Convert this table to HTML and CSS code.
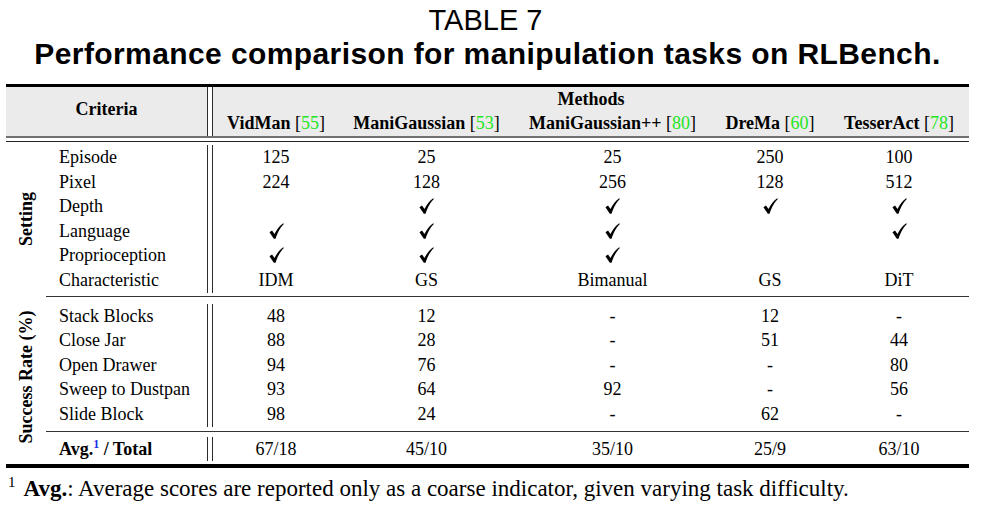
FILE: index.html
```html
<!DOCTYPE html>
<html>
<head>
<meta charset="utf-8">
<title>Table 7</title>
<link rel="stylesheet" href="styles.css">
</head>
<body>
<div class="page">
  <div class="cap1">TABLE 7</div>
  <div class="cap2">Performance comparison for manipulation tasks on RLBench.</div>
  <div class="toprule"></div>
  <table class="tbl">
    <colgroup>
      <col class="w0"><col class="w1"><col class="wd"><col class="wv"><col class="wm"><col class="wp"><col class="wr"><col class="wt">
    </colgroup>
    <thead>
      <tr class="h1">
        <th colspan="2" rowspan="2" class="crit-h">Criteria</th>
        <th rowspan="2" class="dbl dbl-h"></th>
        <th colspan="5">Methods</th>
      </tr>
      <tr class="h2">
        <th>VidMan <span class="cite">[<span class="g">55</span>]</span></th>
        <th>ManiGaussian <span class="cite">[<span class="g">53</span>]</span></th>
        <th>ManiGaussian++ <span class="cite">[<span class="g">80</span>]</span></th>
        <th>DreMa <span class="cite">[<span class="g">60</span>]</span></th>
        <th>TesserAct <span class="cite">[<span class="g">78</span>]</span></th>
      </tr>
    </thead>
    <tbody>
      <tr class="rule"><td colspan="8"><div class="hdline"></div></td></tr>

      <tr>
        <td rowspan="6" class="grp"><span class="vlab vlab-set">Setting</span></td>
        <td class="crit">Episode</td><td class="dbl"></td>
        <td>125</td><td>25</td><td>25</td><td>250</td><td>100</td>
      </tr>
      <tr>
        <td class="crit">Pixel</td><td class="dbl"></td>
        <td>224</td><td>128</td><td>256</td><td>128</td><td>512</td>
      </tr>
      <tr>
        <td class="crit">Depth</td><td class="dbl"></td>
        <td></td>
        <td><svg class="ck" viewBox="0 0 14 15"><path d="M0.4 8.7 L2.8 7.1 L5.1 10.2 C7.3 6 10 2.6 13.3 0.2 L13.9 0.9 C11 3.7 8.5 7.6 6.1 14.7 L4.5 14.7 Z"/></svg></td>
        <td><svg class="ck" viewBox="0 0 14 15"><path d="M0.4 8.7 L2.8 7.1 L5.1 10.2 C7.3 6 10 2.6 13.3 0.2 L13.9 0.9 C11 3.7 8.5 7.6 6.1 14.7 L4.5 14.7 Z"/></svg></td>
        <td><svg class="ck" viewBox="0 0 14 15"><path d="M0.4 8.7 L2.8 7.1 L5.1 10.2 C7.3 6 10 2.6 13.3 0.2 L13.9 0.9 C11 3.7 8.5 7.6 6.1 14.7 L4.5 14.7 Z"/></svg></td>
        <td><svg class="ck" viewBox="0 0 14 15"><path d="M0.4 8.7 L2.8 7.1 L5.1 10.2 C7.3 6 10 2.6 13.3 0.2 L13.9 0.9 C11 3.7 8.5 7.6 6.1 14.7 L4.5 14.7 Z"/></svg></td>
      </tr>
      <tr>
        <td class="crit">Language</td><td class="dbl"></td>
        <td><svg class="ck" viewBox="0 0 14 15"><path d="M0.4 8.7 L2.8 7.1 L5.1 10.2 C7.3 6 10 2.6 13.3 0.2 L13.9 0.9 C11 3.7 8.5 7.6 6.1 14.7 L4.5 14.7 Z"/></svg></td>
        <td><svg class="ck" viewBox="0 0 14 15"><path d="M0.4 8.7 L2.8 7.1 L5.1 10.2 C7.3 6 10 2.6 13.3 0.2 L13.9 0.9 C11 3.7 8.5 7.6 6.1 14.7 L4.5 14.7 Z"/></svg></td>
        <td><svg class="ck" viewBox="0 0 14 15"><path d="M0.4 8.7 L2.8 7.1 L5.1 10.2 C7.3 6 10 2.6 13.3 0.2 L13.9 0.9 C11 3.7 8.5 7.6 6.1 14.7 L4.5 14.7 Z"/></svg></td>
        <td></td>
        <td><svg class="ck" viewBox="0 0 14 15"><path d="M0.4 8.7 L2.8 7.1 L5.1 10.2 C7.3 6 10 2.6 13.3 0.2 L13.9 0.9 C11 3.7 8.5 7.6 6.1 14.7 L4.5 14.7 Z"/></svg></td>
      </tr>
      <tr>
        <td class="crit">Proprioception</td><td class="dbl"></td>
        <td><svg class="ck" viewBox="0 0 14 15"><path d="M0.4 8.7 L2.8 7.1 L5.1 10.2 C7.3 6 10 2.6 13.3 0.2 L13.9 0.9 C11 3.7 8.5 7.6 6.1 14.7 L4.5 14.7 Z"/></svg></td>
        <td><svg class="ck" viewBox="0 0 14 15"><path d="M0.4 8.7 L2.8 7.1 L5.1 10.2 C7.3 6 10 2.6 13.3 0.2 L13.9 0.9 C11 3.7 8.5 7.6 6.1 14.7 L4.5 14.7 Z"/></svg></td>
        <td><svg class="ck" viewBox="0 0 14 15"><path d="M0.4 8.7 L2.8 7.1 L5.1 10.2 C7.3 6 10 2.6 13.3 0.2 L13.9 0.9 C11 3.7 8.5 7.6 6.1 14.7 L4.5 14.7 Z"/></svg></td>
        <td></td><td></td>
      </tr>
      <tr>
        <td class="crit">Characteristic</td><td class="dbl"></td>
        <td>IDM</td><td>GS</td><td>Bimanual</td><td>GS</td><td>DiT</td>
      </tr>

      <tr class="rule"><td></td><td colspan="7"><div class="mid mid-a"></div></td></tr>

      <tr>
        <td rowspan="5" class="grp"><span class="vlab vlab-sr">Success Rate (%)</span></td>
        <td class="crit">Stack Blocks</td><td class="dbl"></td>
        <td>48</td><td>12</td><td>-</td><td>12</td><td>-</td>
      </tr>
      <tr>
        <td class="crit">Close Jar</td><td class="dbl"></td>
        <td>88</td><td>28</td><td>-</td><td>51</td><td>44</td>
      </tr>
      <tr>
        <td class="crit">Open Drawer</td><td class="dbl"></td>
        <td>94</td><td>76</td><td>-</td><td>-</td><td>80</td>
      </tr>
      <tr>
        <td class="crit">Sweep to Dustpan</td><td class="dbl"></td>
        <td>93</td><td>64</td><td>92</td><td>-</td><td>56</td>
      </tr>
      <tr>
        <td class="crit">Slide Block</td><td class="dbl"></td>
        <td>98</td><td>24</td><td>-</td><td>62</td><td>-</td>
      </tr>

      <tr class="rule"><td></td><td colspan="7"><div class="mid mid-b"></div></td></tr>

      <tr>
        <td></td>
        <td class="crit bold">Avg.<sup class="fn">1</sup> / Total</td><td class="dbl"></td>
        <td>67/18</td><td>45/10</td><td>35/10</td><td>25/9</td><td>63/10</td>
      </tr>
    </tbody>
  </table>
  <div class="botrule"></div>
  <div class="foot"><sup class="fmark">1</sup><b>Avg.</b>: Average scores are reported only as a coarse indicator, given varying task difficulty.</div>
</div>
</body>
</html>
```

FILE: styles.css
```css
html, body {
  margin: 0;
  padding: 0;
  background: #fff;
}

body {
  font-family: "Liberation Serif", "Times New Roman", serif;
  color: #000;
}

.page {
  width: 963px;
  margin-left: 6px;
  padding-top: 4px;
}

.cap1 {
  font-family: "Liberation Sans", Arial, sans-serif;
  font-size: 29px;
  line-height: 33px;
  text-align: center;
  padding-right: 4px;
}

.cap2 {
  font-family: "Liberation Sans", Arial, sans-serif;
  font-size: 30px;
  line-height: 34px;
  font-weight: bold;
  letter-spacing: 0.4px;
  text-align: center;
}

.toprule {
  margin-top: 13px;
  height: 3px;
  background: #000;
}

.tbl {
  width: 963px;
  table-layout: fixed;
  border-collapse: collapse;
  font-size: 18px;
}

.w0 { width: 40px; }
.w1 { width: 161px; }
.wd { width: 6px; }
.wv { width: 126px; }
.wm { width: 175px; }
.wp { width: 197px; }
.wr { width: 118px; }
.wt { width: 140px; }

.tbl th,
.tbl td {
  padding: 0;
  text-align: center;
  white-space: nowrap;
}

.tbl td {
  line-height: 24.6px;
}

thead tr {
  background: #ebebeb;
}

.h1 th {
  line-height: 20px;
  padding-top: 2px;
  padding-bottom: 2px;
}

.h2 th {
  line-height: 25px;
}

.tbl .crit-h {
  vertical-align: middle;
  padding-top: 0;
  padding-bottom: 5px;
}

.cite {
  font-weight: normal;
}

.g {
  color: #22e622;
}

.dbl {
  background: linear-gradient(to right, #2b2b2b 0 1px, transparent 1px 5px, #2b2b2b 5px 6px);
}

.dbl-h {
  background-color: #fff;
}

.tbl .crit {
  text-align: left;
  padding-left: 13px;
}

.bold {
  font-weight: bold;
}

.fn {
  color: #1a2fe0;
  font-size: 12px;
  line-height: 0;
  vertical-align: 7px;
}

.tbl .rule td {
  line-height: 0;
  font-size: 0;
}

.hdline {
  height: 3px;
  border-top: 2px solid #707070;
  border-bottom: 1px solid #222;
  margin-bottom: 3px;
}

.mid {
  height: 1px;
  background: #333;
}

.mid-a {
  margin: 3px 0 7px;
}

.mid-b {
  margin: 4px 0 5px;
}

.grp {
  position: relative;
}

.vlab {
  position: absolute;
  left: 50%;
  top: 50%;
  font-weight: bold;
  white-space: nowrap;
  line-height: 20px;
}

.vlab-set {
  transform: translate(-50%, -50%) rotate(-90deg);
}

.vlab-sr {
  transform: translate(-50%, -50%) translateY(12px) rotate(-90deg);
}

.ck {
  width: 15px;
  height: 16px;
  vertical-align: -2px;
  fill: #000;
}

.botrule {
  margin-top: 3px;
  height: 4px;
  background: #000;
}

.foot {
  margin-top: 8px;
  padding-left: 2px;
  font-size: 23px;
  line-height: 26px;
  white-space: nowrap;
}

.fmark {
  font-size: 15px;
  line-height: 0;
  vertical-align: 9px;
  margin-right: 8px;
}
```
